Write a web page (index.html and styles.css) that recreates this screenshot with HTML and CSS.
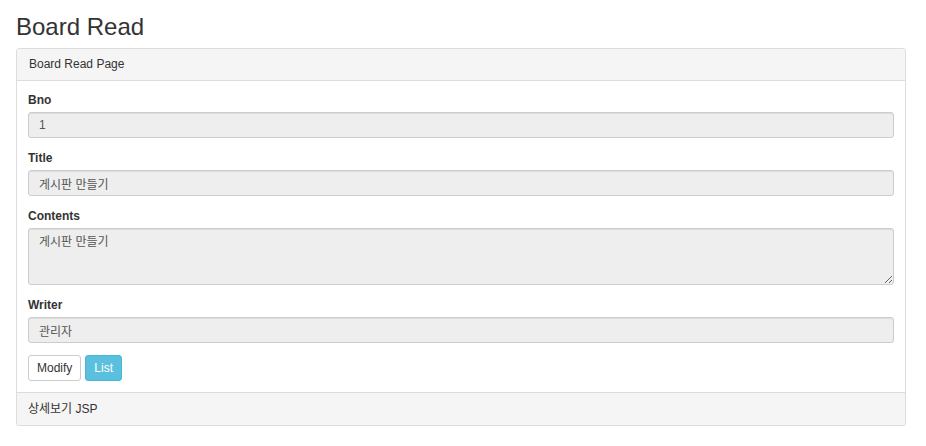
FILE: index.html
```html
<!DOCTYPE html>
<html lang="ko">
<head>
<meta charset="utf-8">
<title>Board Read</title>
<link rel="stylesheet" href="styles.css">
</head>
<body>
<div class="page">
  <h1 class="page-title">Board Read</h1>
  <div class="panel">
    <div class="panel-heading">Board Read Page</div>
    <div class="panel-body">
      <div class="form-group">
        <label class="form-label">Bno</label>
        <input class="form-control" type="text" value="1" readonly>
      </div>
      <div class="form-group">
        <label class="form-label">Title</label>
        <input class="form-control" type="text" value="게시판 만들기" readonly>
      </div>
      <div class="form-group">
        <label class="form-label">Contents</label>
        <textarea class="form-control form-textarea" readonly>게시판 만들기</textarea>
      </div>
      <div class="form-group">
        <label class="form-label">Writer</label>
        <input class="form-control" type="text" value="관리자" readonly>
      </div>
      <div class="btn-row">
        <button class="btn btn-default" type="button">Modify</button>
        <button class="btn btn-info" type="button">List</button>
      </div>
    </div>
    <div class="panel-footer">상세보기 JSP</div>
  </div>
</div>
</body>
</html>
```

FILE: styles.css
```css
* { box-sizing: border-box; }
html, body { margin: 0; padding: 0; background: #fff; }
body {
  font-family: "Liberation Sans", Arial, "Noto Sans CJK KR", sans-serif;
  font-size: 12px;
  line-height: 17px;
  color: #333;
}
.page { padding: 0 20px 0 16px; }
.page-title {
  font-size: 24px;
  font-weight: 400;
  line-height: 27px;
  margin: 13px 0 8px;
  color: #333;
}
.panel {
  border: 1px solid #ddd;
  border-radius: 3px;
  background: #fff;
  box-shadow: 0 1px 1px rgba(0,0,0,0.05);
}
.panel-heading {
  background: #f5f5f5;
  border-bottom: 1px solid #ddd;
  height: 32px;
  padding: 7px 12px;
  border-radius: 2px 2px 0 0;
}
.panel-body { padding: 11px 11px 11px; }
.form-group { margin-bottom: 12px; }
.form-label {
  display: block;
  font-weight: 700;
  line-height: 17px;
  margin-bottom: 3px;
}
.form-control {
  display: block;
  width: 100%;
  height: 26px;
  padding: 4px 10px;
  font-family: "Liberation Sans", Arial, "Noto Sans CJK KR", sans-serif;
  font-size: 12px;
  line-height: 16px;
  color: #555;
  background: #eee;
  border: 1px solid #ccc;
  border-radius: 3px;
  box-shadow: inset 0 1px 1px rgba(0,0,0,0.075);
  outline: none;
  margin: 0;
}
.form-textarea {
  height: 57px;
  padding: 5px 10px;
  resize: vertical;
}
.btn-row { display: flex; gap: 4px; }
.btn {
  height: 26px;
  padding: 0 8px;
  font-family: "Liberation Sans", Arial, "Noto Sans CJK KR", sans-serif;
  font-size: 12px;
  line-height: 24px;
  border: 1px solid #ccc;
  border-radius: 3px;
  cursor: pointer;
  margin: 0;
}
.btn-default { background: #fff; color: #333; }
.btn-info { background: #5bc0de; border-color: #46b8da; color: #fff; }
.panel-footer {
  background: #f5f5f5;
  border-top: 1px solid #ddd;
  height: 33px;
  padding: 8px 11px;
  border-radius: 0 0 2px 2px;
}
```
